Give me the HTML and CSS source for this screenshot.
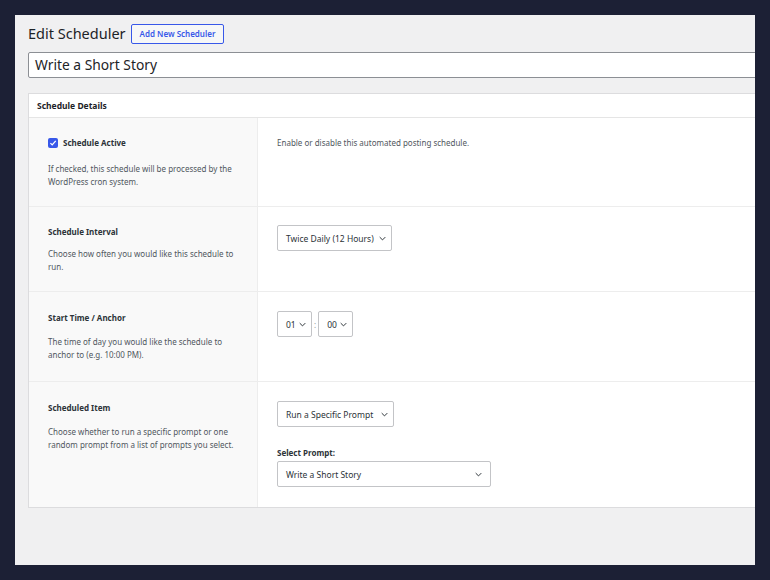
FILE: index.html
```html
<!DOCTYPE html>
<html lang="en">
<head>
    <meta charset="UTF-8">
    <meta name="viewport" content="width=device-width, initial-scale=1.0">
    <title>Edit Scheduler</title>
    <link rel="stylesheet" href="styles.css">
</head>
<body>
    <div class="screen">
        <div class="wrap">
            <header class="page-head">
                <h1>Edit Scheduler</h1>
                <a class="btn-outline" href="#new">Add New Scheduler</a>
            </header>

            <div class="title-input">Write a Short Story</div>

            <section class="panel">
                <h2 class="panel-head">Schedule Details</h2>

                <div class="row">
                    <div class="cell-label">
                        <div class="check-line">
                            <span class="checkbox">
                                <svg viewBox="0 0 10 10" width="8" height="8"><path d="M1.8 5.2 L4 7.4 L8.4 2.4" fill="none" stroke="#fff" stroke-width="1.6"/></svg>
                            </span>
                            <span class="label">Schedule Active</span>
                        </div>
                        <p class="desc">If checked, this schedule will be processed by the WordPress cron system.</p>
                    </div>
                    <div class="cell-field">
                        <p class="note">Enable or disable this automated posting schedule.</p>
                    </div>
                </div>

                <div class="row">
                    <div class="cell-label">
                        <div class="label">Schedule Interval</div>
                        <p class="desc">Choose how often you would like this schedule to run.</p>
                    </div>
                    <div class="cell-field">
                        <div class="select sel-interval">
                            <span>Twice Daily (12 Hours)</span>
                            <svg class="chev" viewBox="0 0 10 6" width="7" height="5"><path d="M1 1 L5 5 L9 1" fill="none" stroke="#2c3338" stroke-width="1.4"/></svg>
                        </div>
                    </div>
                </div>

                <div class="row row-time">
                    <div class="cell-label">
                        <div class="label">Start Time / Anchor</div>
                        <p class="desc">The time of day you would like the schedule to anchor to (e.g. 10:00 PM).</p>
                    </div>
                    <div class="cell-field">
                        <div class="time">
                            <div class="select sel-small">
                                <span>01</span>
                                <svg class="chev" viewBox="0 0 10 6" width="7" height="5"><path d="M1 1 L5 5 L9 1" fill="none" stroke="#2c3338" stroke-width="1.4"/></svg>
                            </div>
                            <span class="colon">:</span>
                            <div class="select sel-small">
                                <span>00</span>
                                <svg class="chev" viewBox="0 0 10 6" width="7" height="5"><path d="M1 1 L5 5 L9 1" fill="none" stroke="#2c3338" stroke-width="1.4"/></svg>
                            </div>
                        </div>
                    </div>
                </div>

                <div class="row row-item">
                    <div class="cell-label">
                        <div class="label">Scheduled Item</div>
                        <p class="desc">Choose whether to run a specific prompt or one random prompt from a list of prompts you select.</p>
                    </div>
                    <div class="cell-field">
                        <div class="select sel-mode">
                            <span>Run a Specific Prompt</span>
                            <svg class="chev" viewBox="0 0 10 6" width="7" height="5"><path d="M1 1 L5 5 L9 1" fill="none" stroke="#2c3338" stroke-width="1.4"/></svg>
                        </div>
                        <div class="field-label">Select Prompt:</div>
                        <div class="select sel-prompt">
                            <span>Write a Short Story</span>
                            <svg class="chev" viewBox="0 0 10 6" width="7" height="5"><path d="M1 1 L5 5 L9 1" fill="none" stroke="#2c3338" stroke-width="1.4"/></svg>
                        </div>
                    </div>
                </div>
            </section>
        </div>
    </div>
</body>
</html>
```

FILE: styles.css
```css
:root {
    --frame: #1c2035;
    --page: #f0f0f1;
    --text: #1d2327;
    --muted: #50575e;
    --blue: #3858e9;
    --line: #e5e5e5;
    --input-border: #c3c4c7;
}

* {
    box-sizing: border-box;
    margin: 0;
}

body {
    background: var(--frame);
    padding: 15px;
    font-family: "Noto Sans", "Open Sans", sans-serif;
    color: var(--text);
}

/* the page area inside the dark frame */
.screen {
    width: 740px;
    height: 550px;
    background: var(--page);
    overflow: hidden;
}

.wrap {
    width: 820px;
    padding: 8px 0 0 13px;
}

/* header */
.page-head {
    display: flex;
    align-items: center;
    gap: 5px;
    height: 21px;
}

.page-head h1 {
    font-size: 14.5px;
    font-weight: 400;
    color: var(--text);
    line-height: 21px;
}

.btn-outline {
    display: inline-block;
    height: 20px;
    line-height: 18px;
    padding: 0 8px;
    border: 1px solid var(--blue);
    border-radius: 2px;
    background: #f6f7f7;
    color: var(--blue);
    font-size: 8px;
    font-weight: 600;
    text-decoration: none;
}

.title-input {
    margin-top: 8px;
    height: 26px;
    border: 1px solid #8c8f94;
    border-radius: 2px;
    background: #fff;
    padding: 0 6px;
    font-size: 13.8px;
    line-height: 24px;
}

/* settings panel */
.panel {
    margin-top: 15px;
    background: #fff;
    border: 1px solid #dcdcde;
}

.panel-head {
    height: 24px;
    line-height: 23px;
    padding: 0 8px;
    font-size: 8.5px;
    font-weight: 700;
    border-bottom: 1px solid var(--line);
}

.row {
    display: grid;
    grid-template-columns: 229px 1fr;
    border-bottom: 1px solid #ededed;
}

.row:last-child {
    border-bottom: 0;
}

.cell-label {
    background: #f9f9f9;
    border-right: 1px solid #ededed;
    padding: 19px 19px 18px 19px;
}

.cell-field {
    padding: 18px 19px 19px 19px;
}

.row-time .cell-label {
    padding-top: 20px;
    padding-bottom: 20px;
}

.row-time .desc {
    margin-top: 11px;
}

.row-time .cell-field,
.row-item .cell-field {
    padding-top: 19px;
    padding-bottom: 20px;
}

.row-item .cell-label {
    padding-top: 20px;
}

.row-item .desc {
    margin-top: 11px;
}

.label,
.field-label {
    font-size: 8px;
    font-weight: 700;
    line-height: 12px;
    color: #2c3338;
}

.check-line {
    display: flex;
    align-items: center;
    gap: 5px;
    height: 12px;
}

.checkbox {
    width: 10px;
    height: 10px;
    border-radius: 2px;
    background: var(--blue);
    display: flex;
    align-items: center;
    justify-content: center;
}

.desc {
    margin-top: 9px;
    font-size: 8px;
    line-height: 13px;
    color: var(--muted);
}

.check-line + .desc {
    margin-top: 13px;
}

.note {
    margin-top: 1px;
    font-size: 8px;
    line-height: 12px;
    color: var(--muted);
}

/* select look-alikes */
.select {
    display: flex;
    align-items: center;
    justify-content: space-between;
    height: 26px;
    border: 1px solid var(--input-border);
    border-radius: 2px;
    background: #fff;
    padding: 0 5px 0 8px;
    font-size: 8.5px;
    color: #2c3338;
}

.sel-interval { width: 115px; }
.sel-mode { width: 117px; }
.sel-prompt { width: 214px; padding-right: 8px; }
.sel-small { width: 35px; }

.time {
    display: flex;
    align-items: center;
    gap: 2px;
}

.colon {
    font-size: 8px;
    color: #8c8f94;
}

.field-label {
    margin: 20px 0 2px;
}
```
